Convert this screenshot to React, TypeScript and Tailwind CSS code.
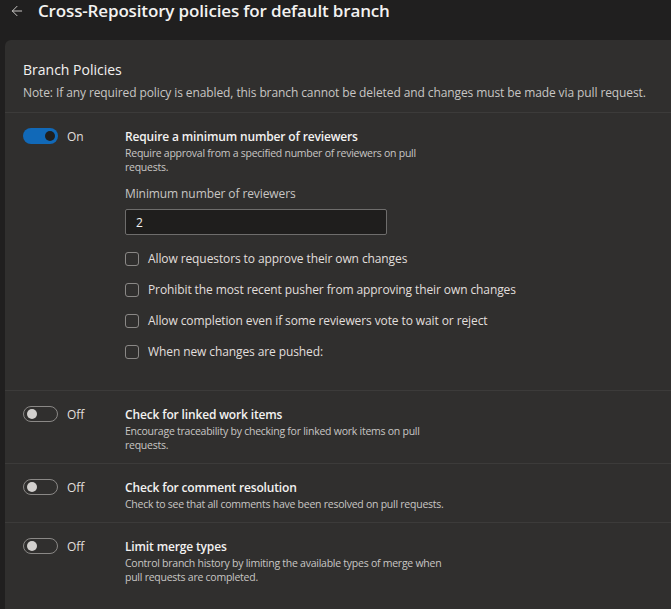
import { ArrowLeft } from 'lucide-react';

interface Policy {
  title: string;
  description: string;
  enabled: boolean;
}

const policies: Policy[] = [
  {
    title: 'Check for linked work items',
    description: 'Encourage traceability by checking for linked work items on pull requests.',
    enabled: false,
  },
  {
    title: 'Check for comment resolution',
    description: 'Check to see that all comments have been resolved on pull requests.',
    enabled: false,
  },
  {
    title: 'Limit merge types',
    description: 'Control branch history by limiting the available types of merge when pull requests are completed.',
    enabled: false,
  },
];

const reviewerOptions = [
  'Allow requestors to approve their own changes',
  'Prohibit the most recent pusher from approving their own changes',
  'Allow completion even if some reviewers vote to wait or reject',
  'When new changes are pushed:',
];

function Toggle({ on }: { on: boolean }) {
  return (
    <div className="flex items-center gap-[9px] w-[102px] shrink-0 h-[18px] -mt-px">
      {on ? (
        <span className="flex items-center justify-end w-[35px] h-4 rounded-full bg-[#1169b8] pr-[3px]">
          <span className="w-[10px] h-[10px] rounded-full bg-[#1f1f1f]" />
        </span>
      ) : (
        <span className="flex items-center w-[35px] h-4 rounded-full border border-[#8a8886] pl-[3px]">
          <span className="w-[10px] h-[10px] rounded-full bg-[#d2d0ce]" />
        </span>
      )}
      <span className="text-[12px] leading-[18px] text-[#e1dfdd] mt-[2px]">{on ? 'On' : 'Off'}</span>
    </div>
  );
}

function PolicyText({ title, description }: { title: string; description: string }) {
  return (
    <>
      <div className="text-[12px] leading-[18px] font-semibold tracking-[-0.15px] text-[#f3f2f1]">{title}</div>
      <div className="text-[10.5px] leading-[14px] tracking-[-0.25px] text-[#c8c6c4] max-w-[330px]">
        {description}
      </div>
    </>
  );
}

export default function App() {
  return (
    <div
      className="min-h-screen bg-[#201f1f] text-[#f3f2f1]"
      style={{ fontFamily: '"Segoe UI", "Open Sans", sans-serif' }}
    >
      {/* Header */}
      <div className="h-[41px] flex items-start pl-[9px] -mt-[1px]">
        <ArrowLeft size={16} strokeWidth={1.5} className="text-[#c8c6c4] mt-[4px]" />
        <h1 className="ml-[13px] text-[17px] leading-[24px] font-semibold tracking-[-0.15px] text-[#f3f2f1]">
          Cross-Repository policies for default branch
        </h1>
      </div>

      {/* Card */}
      <div className="ml-[5px] rounded-tl-md bg-[#302f2e] min-h-[569px]">
        <div className="px-[18px] pt-5 pb-[10px] border-b border-[#3c3b3a]">
          <h2 className="text-[14px] leading-5 text-[#f3f2f1]">Branch Policies</h2>
          <p className="mt-1 text-[12px] leading-[18px] tracking-[-0.1px] text-[#c8c6c4] whitespace-nowrap">
            Note: If any required policy is enabled, this branch cannot be deleted and changes must be made via pull request.
          </p>
        </div>

        {/* Minimum reviewers */}
        <div className="flex items-start px-[18px] pt-[15px] pb-[23px] border-b border-[#3c3b3a]">
          <Toggle on />
          <div className="flex flex-col">
            <PolicyText
              title="Require a minimum number of reviewers"
              description="Require approval from a specified number of reviewers on pull requests."
            />
            <label className="mt-[11px] text-[12px] leading-[18px] tracking-[-0.1px] text-[#c8c6c4]">
              Minimum number of reviewers
            </label>
            <input
              type="text"
              defaultValue="2"
              className="mt-[6px] w-[262px] h-[26px] px-[10px] bg-[#1f1e1d] border border-[#6e6d6c] rounded-[2px] text-[12px] text-[#f3f2f1] outline-none"
            />
            <div className="mt-2 flex flex-col">
              {reviewerOptions.map((opt) => (
                <label
                  key={opt}
                  className="flex items-center h-[31px] gap-[9px] text-[12px] tracking-[-0.1px] text-[#e1dfdd]"
                >
                  <span className="w-[14px] h-[14px] rounded-[3px] border border-[#8a8886]" />
                  {opt}
                </label>
              ))}
            </div>
          </div>
        </div>

        {policies.map((p) => (
          <div
            key={p.title}
            className="flex items-start px-[18px] pt-[15px] pb-[11px] border-b border-[#3c3b3a] last:border-b-0"
          >
            <Toggle on={p.enabled} />
            <div className="flex flex-col">
              <PolicyText title={p.title} description={p.description} />
            </div>
          </div>
        ))}
      </div>
    </div>
  );
}
